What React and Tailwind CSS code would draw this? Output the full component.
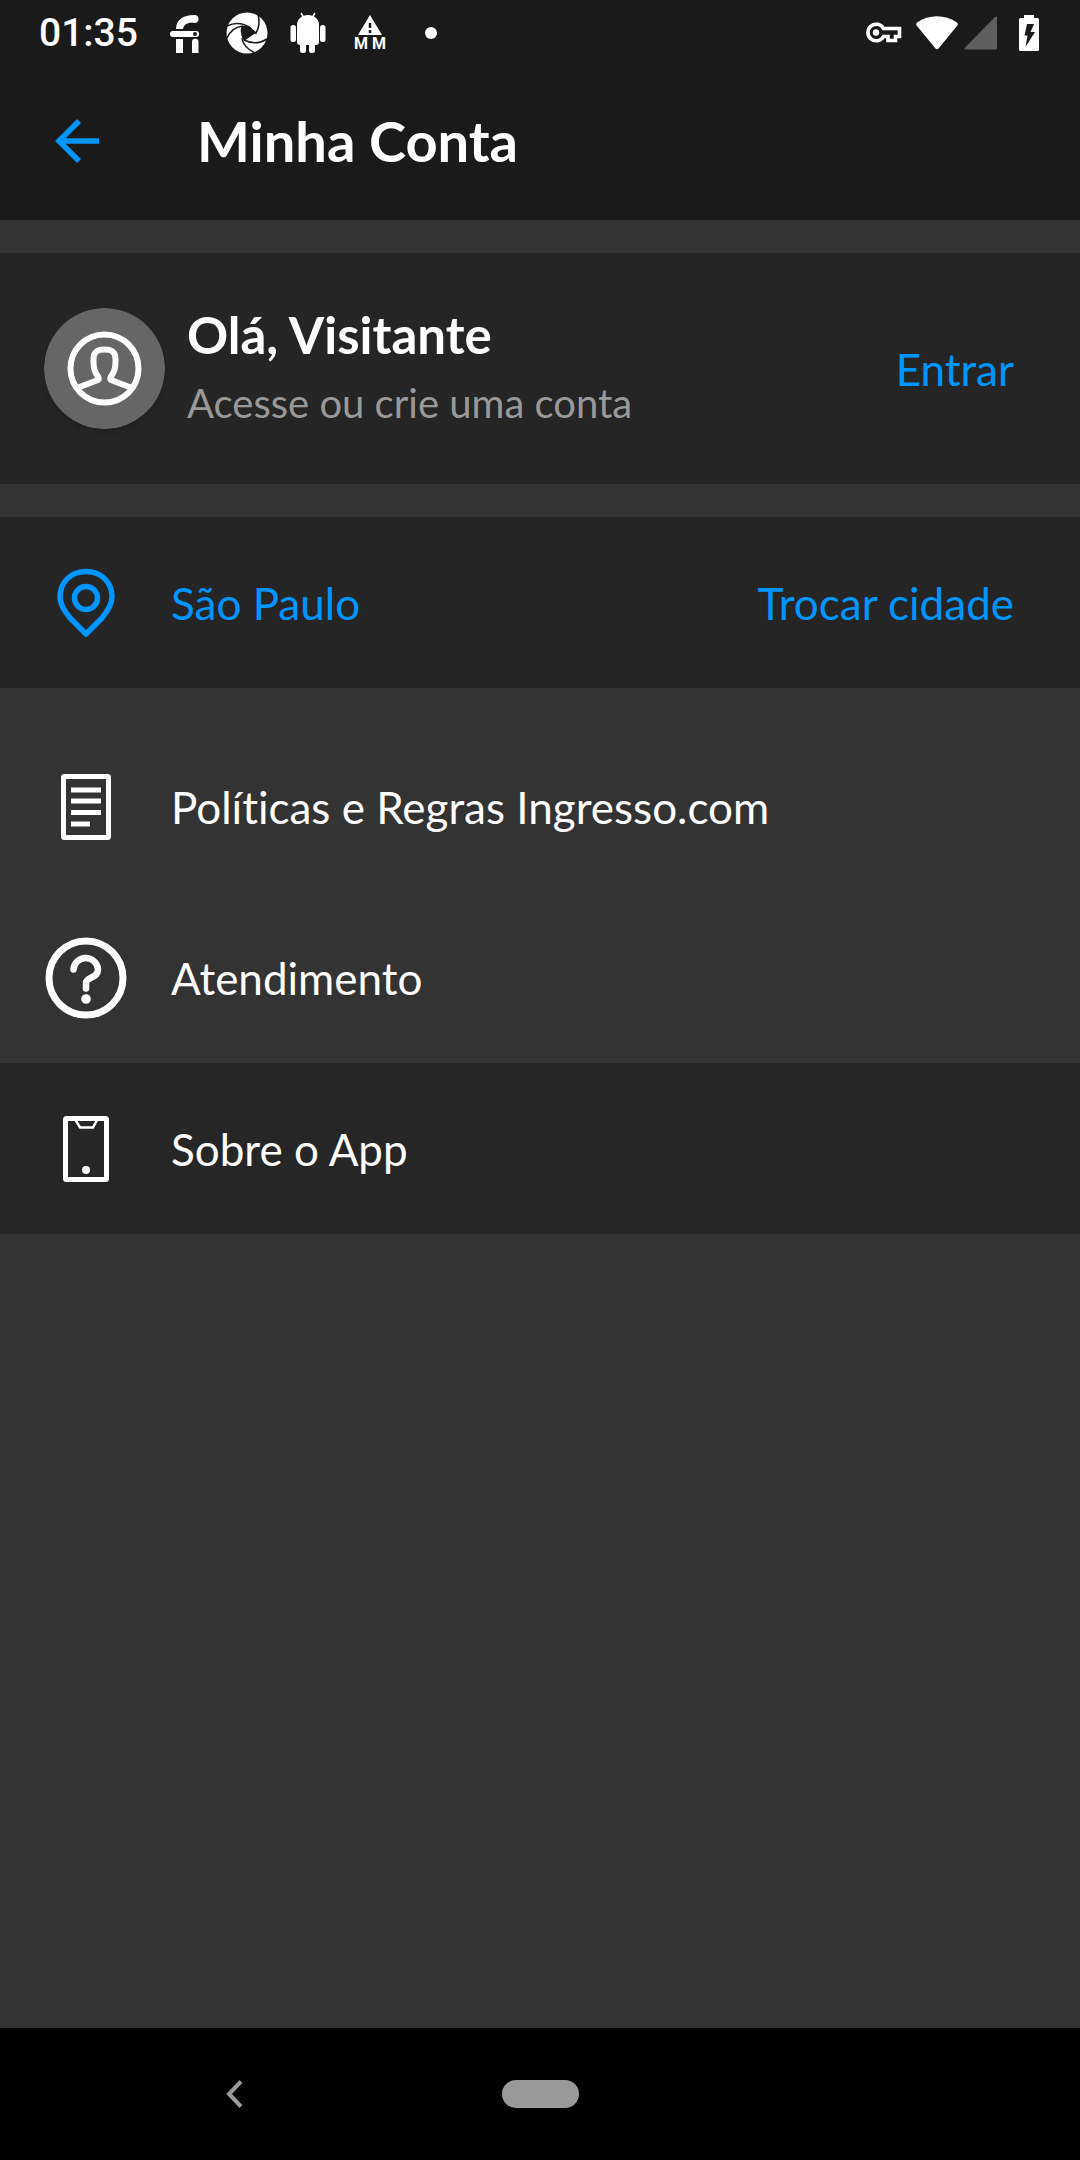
import React from "react";

const BLUE = "text-[#0096ff]";

function FiIcon() {
  return (
    <svg width="30" height="39" viewBox="0 0 30 39" fill="#fff" aria-hidden="true">
      <path d="M6 15C6 6 13 1 24 1A4 4 0 0 1 25 9C18 8 14 10 13 15Z" />
      <rect x="0" y="17" width="29" height="6" rx="3" />
      <circle cx="25" cy="20" r="2" fill="#1a1a1a" />
      <path d="M6 25h7v14H6zM22 28a3 3 0 0 1 6.500 0v11H22z" />
    </svg>
  );
}

function ApertureIcon() {
  return (
    <svg width="42" height="42" viewBox="0 0 42 42" aria-hidden="true">
      <circle cx="21" cy="21" r="20.500" fill="#fff" />
      <path d="M15.500 14Q20 13 24 15L30.500 20.500L18 29Q13 21 15.500 14Z" fill="#1a1a1a" />
      <g fill="none" stroke="#1a1a1a" strokeWidth="1.500">
        <path d="M1 14Q13 8 25 16" />
        <path d="M32 2Q35 13 29.500 22" />
        <path d="M41 27Q30 34 18 28" />
        <path d="M29 41Q17 35 16 26" />
        <path d="M1 26Q6 15 17 14" />
      </g>
    </svg>
  );
}

function AndroidIcon() {
  return (
    <svg width="36" height="42" viewBox="0 0 36 42" fill="#fff" aria-hidden="true">
      <path d="M11 1l3 5M25 1l-3 5" stroke="#fff" strokeWidth="1.500" />
      <path d="M7 13C7 7 12 3 18 3s11 4 11 10v17a3 3 0 0 1-3 3H10a3 3 0 0 1-3-3z" />
      <rect x="0.500" y="13" width="5.500" height="17" rx="2.500" />
      <rect x="30" y="13" width="5.500" height="17" rx="2.500" />
      <rect x="10" y="28" width="6" height="13" rx="2.500" />
      <rect x="19" y="28" width="6" height="13" rx="2.500" />
    </svg>
  );
}

function WarningIcon() {
  return (
    <svg width="24" height="21" viewBox="0 0 24 21" aria-hidden="true">
      <path d="M12 0L24 20H0z" fill="#fff" />
      <path d="M12 8v5M12 15v3" stroke="#1a1a1a" strokeWidth="2.500" />
    </svg>
  );
}

function KeyIcon() {
  return (
    <svg width="36" height="22" viewBox="0 0 36 22" fill="none" stroke="#fff" strokeWidth="3.600" aria-hidden="true">
      <path d="M17.500 6.500A8.300 8.300 0 1 0 17.500 14.500H22V18.500H29.500V14.500H33.500V6.500Z" />
      <circle cx="10" cy="10.500" r="3.200" fill="#fff" stroke="none" />
    </svg>
  );
}

function WifiIcon() {
  return (
    <svg width="42" height="34" viewBox="0 0 42 34" fill="#fff" aria-hidden="true">
      <path d="M1 6.500C13-2 29-2 41 6.500Q42.500 8 41 10L22.500 32.500Q21 34 19.500 32.500L1 10Q-.5 8 1 6.500Z" />
    </svg>
  );
}

function SignalIcon() {
  return (
    <svg width="34" height="34" viewBox="0 0 34 34" fill="#5f5f5f" aria-hidden="true">
      <path d="M31 1q2-1.500 2 1V32q0 1.500-1.500 1.500H2q-2.500 0-1-2z" />
    </svg>
  );
}

function BatteryIcon() {
  return (
    <svg width="20" height="36" viewBox="0 0 20 36" aria-hidden="true">
      <path d="M5 0h10v3h3.500q1.500 0 1.500 1.500v30q0 1.500-1.500 1.500h-17Q0 36 0 34.500v-30Q0 3 1.500 3H5z" fill="#fff" />
      <path d="M8 9h7l-3.500 8H16L6.500 32l2-11.500H5.500z" fill="#1a1a1a" />
    </svg>
  );
}

function BackArrow() {
  return (
    <svg width="44" height="44" viewBox="0 0 44 44" fill="none" stroke="currentColor" strokeWidth="5.500" aria-hidden="true">
      <path d="M24 2L4 22L24 42M5 22H44" />
    </svg>
  );
}

function Avatar() {
  return (
    <svg className="shrink-0 rounded-full shadow-md" width="121" height="121" viewBox="0 0 121 121" fill="none" stroke="#fff" strokeWidth="6" aria-hidden="true">
      <circle cx="60.500" cy="60.500" r="60.500" fill="#666" stroke="none" />
      <circle cx="60.500" cy="60.500" r="34" />
      <path strokeLinejoin="round" d="M33 80L54 72Q55.500 71 54 68.500Q49.500 63 49.500 54V51C49.500 44 53 41.500 60.500 41.500S71.500 44 71.500 51V54Q71.500 63 67 68.500Q65.500 71 67 72L88 80" />
    </svg>
  );
}

function PinIcon() {
  return (
    <svg width="58" height="70" viewBox="0 0 58 70" fill="none" stroke="currentColor" strokeWidth="5.500" strokeLinejoin="round" aria-hidden="true">
      <path d="M29 66L44.500 50.500Q55 38 55 29C55 14 44 3.500 29 3.500S3 14 3 29Q3 38 13.500 50.500Z" />
      <circle cx="29" cy="30" r="11.500" />
    </svg>
  );
}

function DocumentIcon() {
  return (
    <svg width="50" height="66" viewBox="0 0 50 66" fill="none" stroke="currentColor" strokeWidth="5" aria-hidden="true">
      <rect x="2.500" y="2.500" width="45" height="61" rx="1" />
      <path d="M10 16H40M10 27H40M10 38.500H40M10 50H29" />
    </svg>
  );
}

function HelpIcon() {
  return (
    <svg width="82" height="82" viewBox="0 0 82 82" fill="none" stroke="currentColor" strokeWidth="7" strokeLinecap="round" aria-hidden="true">
      <circle cx="41" cy="41" r="37" />
      <path strokeWidth="6.500" d="M28.500 32.500A12.300 12.300 0 0 1 53 32C53 42 41 39.500 41 46V51.500" />
      <circle cx="41" cy="62" r="4.800" fill="currentColor" stroke="none" />
    </svg>
  );
}

function PhoneIcon() {
  return (
    <svg width="46" height="66" viewBox="0 0 46 66" fill="none" stroke="currentColor" strokeWidth="5" aria-hidden="true">
      <rect x="2.500" y="2.500" width="41" height="61" rx="1" />
      <path strokeWidth="2.500" d="M12.500 4L17 11.500H30L34 4" />
      <circle cx="23" cy="54" r="4" fill="currentColor" stroke="none" />
    </svg>
  );
}

function StatusBar() {
  return (
    <div className="flex h-[66px] items-center pl-[39px] pr-[41px] text-white">
      <span className="font-['Roboto',sans-serif] text-[39px] font-medium">01:35</span>
      <div className="ml-8 flex items-center">
        <FiIcon />
        <span className="ml-[26px]"><ApertureIcon /></span>
        <span className="ml-[22px]"><AndroidIcon /></span>
        <span className="ml-[28px] flex flex-col items-center">
          <WarningIcon />
          <span className="flex gap-1 font-['Roboto',sans-serif] text-[16px] font-bold leading-4">
            <span>M</span>
            <span>M</span>
          </span>
        </span>
        <span className="ml-[39px] size-3 rounded-full bg-white" />
      </div>
      <div className="ml-auto flex items-center">
        <KeyIcon />
        <span className="ml-[14px]"><WifiIcon /></span>
        <span className="ml-[6px]"><SignalIcon /></span>
        <span className="ml-[21px]"><BatteryIcon /></span>
      </div>
    </div>
  );
}

function MenuRow({ icon, label, dark }) {
  return (
    <li>
      <button type="button" className={"flex h-[171px] w-full items-center pl-[44px] text-left text-white " + (dark ? "bg-[#262626]" : "")}>
        <span className="flex w-[83px] justify-center">{icon}</span>
        <span className="ml-[44px] text-[44px]">{label}</span>
      </button>
    </li>
  );
}

export default function App() {
  return (
    <div className="flex min-h-screen flex-col bg-[#333333] font-['Lato',sans-serif] [font-variant-ligatures:none]">
      <header className="bg-[#1a1a1a]">
        <StatusBar />
        <div className="flex h-[154px] items-center pb-1 pl-[55px]">
          <button type="button" aria-label="Voltar" className={BLUE}><BackArrow /></button>
          <h1 className="ml-[98px] text-[56px] font-bold text-white">Minha Conta</h1>
        </div>
      </header>

      <main className="flex-1">
        <section className="mt-[33px] flex h-[231px] items-center bg-[#252525] pl-[44px] pr-[66px]">
          <Avatar />
          <div className="ml-[22px]">
            <h2 className="text-[51px] font-bold leading-[68px] text-white">Olá, Visitante</h2>
            <p className="text-[40px] leading-[68px] text-[#999]">Acesse ou crie uma conta</p>
          </div>
          <a href="#entrar" className={"ml-auto text-[44px] " + BLUE}>Entrar</a>
        </section>

        <section className={"mt-[33px] flex h-[171px] items-center bg-[#252525] pl-[44px] pr-[66px] text-[44px] " + BLUE}>
          <span className="flex w-[83px] justify-center"><PinIcon /></span>
          <span className="ml-[44px]">São Paulo</span>
          <a href="#cidade" className="ml-auto">Trocar cidade</a>
        </section>

        <ul className="mt-[33px]">
          <MenuRow icon={<DocumentIcon />} label="Políticas e Regras Ingresso.com" />
          <MenuRow icon={<HelpIcon />} label="Atendimento" />
          <MenuRow icon={<PhoneIcon />} label="Sobre o App" dark />
        </ul>
      </main>

      <nav className="grid h-[132px] grid-cols-[1fr_auto_1fr] items-center bg-black">
        <button type="button" aria-label="Voltar" className="justify-self-center pr-[32px]">
          <svg width="17" height="28" viewBox="0 0 17 28" fill="none" stroke="#999" strokeWidth="4" aria-hidden="true">
            <path d="M15 1.500L3 14L15 26.500" />
          </svg>
        </button>
        <button type="button" aria-label="Início" className="h-7 w-[77px] rounded-full bg-[#999]" />
      </nav>
    </div>
  );
}
